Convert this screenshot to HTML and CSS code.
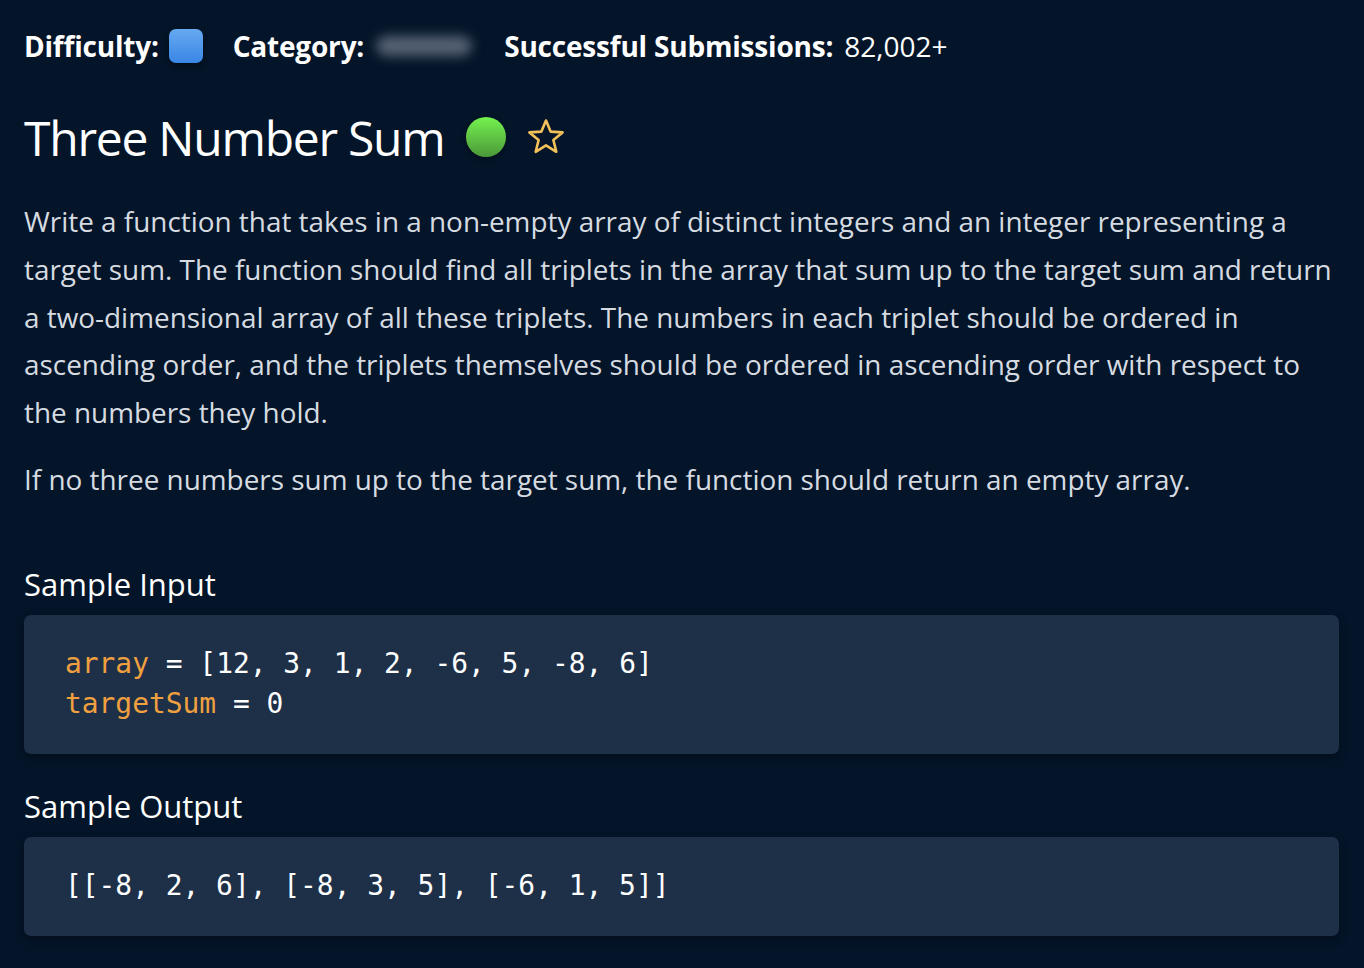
FILE: index.html
```html
<!DOCTYPE html>
<html lang="en">
<head>
<meta charset="utf-8">
<title>Three Number Sum</title>
<link rel="stylesheet" href="styles.css">
</head>
<body>
<main class="page">
  <div class="meta">
    <span class="meta-item"><b>Difficulty:</b><span class="diff-badge"></span></span>
    <span class="meta-item"><b>Category:</b><span class="blurred"></span></span>
    <span class="meta-item"><b>Successful Submissions:</b><span class="count">82,002+</span></span>
  </div>
  <h1 class="title">
    <span>Three Number Sum</span>
    <span class="status-dot"></span>
    <svg class="star" width="40" height="40" viewBox="0 0 40 40" aria-hidden="true">
      <path d="M20 3.5 L24.6 14.6 L36.6 15.4 L27.4 23.1 L30.3 34.8 L20 28.4 L9.7 34.8 L12.6 23.1 L3.4 15.4 L15.4 14.6 Z" fill="none" stroke="#f2c15a" stroke-width="2.6" stroke-linejoin="round"/>
    </svg>
  </h1>
  <p class="desc">Write a function that takes in a non-empty array of distinct integers and an integer representing a target sum. The function should find all triplets in the array that sum up to the target sum and return a two-dimensional array of all these triplets. The numbers in each triplet should be ordered in ascending order, and the triplets themselves should be ordered in ascending order with respect to the numbers they hold.</p>
  <p class="desc second">If no three numbers sum up to the target sum, the function should return an empty array.</p>

  <h3 class="sample-title first">Sample Input</h3>
  <pre class="code"><span class="var">array</span> = [12, 3, 1, 2, -6, 5, -8, 6]
<span class="var">targetSum</span> = 0</pre>

  <h3 class="sample-title">Sample Output</h3>
  <pre class="code">[[-8, 2, 6], [-8, 3, 5], [-6, 1, 5]]</pre>
</main>
</body>
</html>
```
FILE: styles.css
```css
html, body {
  margin: 0;
  padding: 0;
  background: #041529;
}
body {
  font-family: "Open Sans", "Noto Sans", sans-serif;
  color: #d6dbe1;
}
.page {
  padding: 0 25px 0 24px;
}
.meta {
  display: flex;
  align-items: center;
  gap: 30px;
  height: 34px;
  padding-top: 29px;
  font-size: 28px;
  color: #ffffff;
}
.meta-item {
  display: flex;
  align-items: center;
  gap: 10px;
}
.meta b {
  font-weight: 700;
  letter-spacing: -0.2px;
}
.diff-badge {
  width: 34px;
  height: 34px;
  border-radius: 7px;
  background: linear-gradient(#66a9ef, #3a86e6);
  box-shadow: 0 3px 6px rgba(0,0,0,0.45);
}
.blurred {
  width: 96px;
  height: 20px;
  margin-left: 2px;
  margin-right: 2px;
  border-radius: 10px;
  background: #566274;
  filter: blur(6px);
}
.count {
  font-weight: 400;
  margin-left: 1px;
}
.title {
  display: flex;
  align-items: center;
  gap: 22px;
  margin: 44px 0 0;
  height: 60px;
  font-size: 48px;
  font-weight: 500;
  color: #ffffff;
  letter-spacing: -1.25px;
}
.title .star {
  margin-left: -2px;
}
.status-dot {
  width: 40px;
  height: 40px;
  border-radius: 50%;
  background: linear-gradient(#74f24f, #4b9839);
  box-shadow: 0 2px 5px rgba(0,0,0,0.4);
}
.star {
  display: block;
}
.desc {
  margin: 31px -5px 0 0;
  font-size: 27.9px;
  line-height: 47.8px;
}
.desc.second {
  margin-top: 19px;
}
.sample-title {
  margin: 0;
  font-size: 31px;
  font-weight: 400;
  color: #ffffff;
  line-height: 44px;
}
.sample-title.first {
  margin-top: 58px;
}
.code {
  margin: 9px 0 30px;
  padding: 29px 40px 30px 41px;
  background: #1e2f48;
  border-radius: 7px;
  box-shadow: 0 4px 10px rgba(0,0,0,0.35);
  font-family: "DejaVu Sans Mono", "Liberation Mono", monospace;
  font-size: 27.9px;
  line-height: 40px;
  color: #ffffff;
}
.code .var {
  color: #f0a03f;
}
```
